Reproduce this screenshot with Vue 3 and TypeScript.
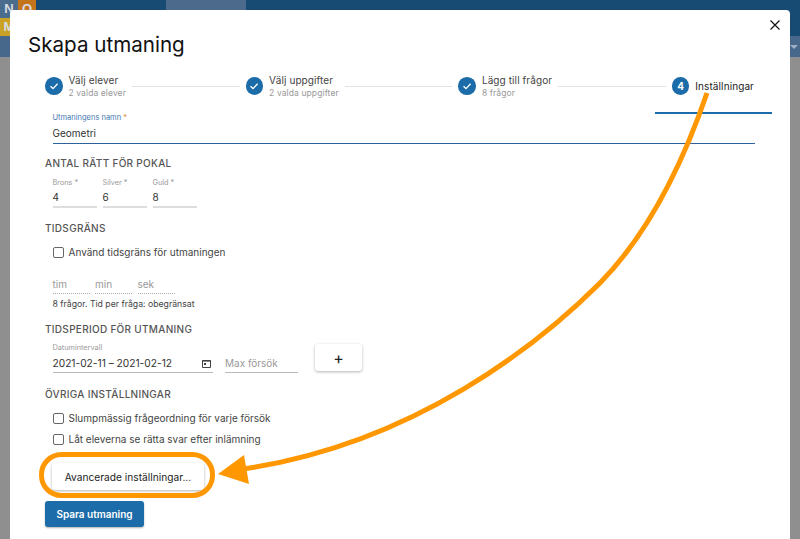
<script setup lang="ts">
const steps = [
  { title: 'Välj elever', sub: '2 valda elever' },
  { title: 'Välj uppgifter', sub: '2 valda uppgifter' },
  { title: 'Lägg till frågor', sub: '8 frågor' },
]
const medals = [
  { label: 'Brons *', value: '4' },
  { label: 'Silver *', value: '6' },
  { label: 'Guld *', value: '8' },
]
const times = ['tim', 'min', 'sek']
</script>

<template>
  <div class="page">
    <div class="topbar">
      <div class="logo">
        <span class="n">N</span><span class="o">O</span>
        <span class="m">M</span><span class="blank"></span>
      </div>
      <div class="tab"></div>
    </div>
    <div class="subbar"><span class="caret"></span></div>
    <div class="modal">
      <button class="close" aria-label="Stäng">
        <svg width="10" height="10" viewBox="0 0 10 10"><path d="M.5 .5 L9.500 9.500 M9.500 .5 L.5 9.500" stroke="#111" stroke-width="1.2" fill="none" /></svg>
      </button>
      <h1>Skapa utmaning</h1>
      <div class="stepper">
        <template v-for="s in steps" :key="s.title">
          <div class="step">
            <span class="dot">
              <svg width="12" height="12" viewBox="0 0 12 12"><path d="M2.500 6.300 L5 8.600 L9.600 3.800" stroke="#fff" stroke-width="1.3" fill="none" /></svg>
            </span>
            <div class="step-text">
              <div class="step-title">{{ s.title }}</div>
              <div class="step-sub">{{ s.sub }}</div>
            </div>
          </div>
          <div class="connector"></div>
        </template>
        <div class="step active">
          <span class="dot"><b>4</b></span>
          <div class="step-title">Inställningar</div>
        </div>
      </div>
      <div class="name-field">
        <div class="name-label">Utmaningens namn <span class="req">*</span></div>
        <div class="name-value">Geometri</div>
      </div>

      <h2 class="h-pokal">ANTAL RÄTT FÖR POKAL</h2>
      <div class="medals">
        <div v-for="m in medals" :key="m.label" class="medal">
          <div class="mini-label">{{ m.label }}</div>
          <div class="medal-value">{{ m.value }}</div>
        </div>
      </div>

      <h2 class="h-tid">TIDSGRÄNS</h2>
      <label class="check first"><span class="box"></span>Använd tidsgräns för utmaningen</label>
      <div class="times">
        <div v-for="t in times" :key="t" class="time">{{ t }}</div>
      </div>
      <div class="hint">8 frågor. Tid per fråga: obegränsat</div>

      <h2 class="h-period">TIDSPERIOD FÖR UTMANING</h2>
      <div class="period">
        <div class="date">
          <div class="mini-label">Datumintervall</div>
          <div class="date-value">
            <span>2021-02-11 – 2021-02-12</span>
            <svg width="9" height="9" viewBox="0 0 9 9"><path d="M.5 1.500h8v7h-8z" stroke="#444" stroke-width="1" fill="none" /><rect x=".5" y="1" width="8" height="1.600" fill="#444" /><rect x="2" y="4" width="2" height="2" fill="#444" /></svg>
          </div>
        </div>
        <div class="max">Max försök</div>
        <button class="plus">+</button>
      </div>

      <h2 class="h-ovr">ÖVRIGA INSTÄLLNINGAR</h2>
      <label class="check c1"><span class="box"></span>Slumpmässig frågeordning för varje försök</label>
      <label class="check c2"><span class="box"></span>Låt eleverna se rätta svar efter inlämning</label>
      <button class="advanced">Avancerade inställningar...</button>
      <button class="save">Spara utmaning</button>
    </div>

    <svg class="annotation" width="800" height="539" viewBox="0 0 800 539">
      <rect x="41.500" y="454.500" width="171" height="41" rx="20" fill="none" stroke="#ff9800" stroke-width="5" />
      <path d="M707 93 C 684 160, 650 232, 600 283 C 540 343, 415 444, 243 469" fill="none" stroke="#ff9800" stroke-width="5" />
      <path d="M218 474 L 244 455 L 249 484 Z" fill="#ff9800" />
    </svg>
  </div>
</template>

<style>
html, body { margin: 0; padding: 0; background: #8e8e8e; }
</style>

<style scoped>
.page {
  position: relative;
  width: 800px;
  height: 539px;
  overflow: hidden;
  background: #8f8f8f;
  font-family: Inter, "Liberation Sans", sans-serif;
  color: #333;
}
.topbar { height: 36px; background: #174b73; display: flex; }
.logo { width: 36px; display: grid; grid-template-columns: 18px 18px; grid-auto-rows: 18px; font: 700 13px/18px "Liberation Sans", sans-serif; text-align: center; color: #d8dde2; }
.n { background: #4a6d8d; }
.o { background: #c4751c; }
.m { background: #c9a227; }
.blank { background: #174b73; }
.tab { width: 80px; height: 36px; margin-left: 130px; background: #4c6a8c; }
.subbar { height: 21px; background: #47688a; position: relative; }
.caret { position: absolute; left: 790px; top: 9px; border-left: 4px solid transparent; border-right: 4px solid transparent; border-top: 4px solid #9fb0c2; }
.modal {
  position: absolute;
  left: 10px;
  top: 10px;
  width: 780px;
  height: 540px;
  background: #fff;
  border-radius: 4px 4px 0 0;
  padding: 0 35px 0 42.500px;
  box-sizing: border-box;
}
.close { position: absolute; right: 10px; top: 10px; border: 0; padding: 0; background: none; width: 10px; height: 10px; display: flex; }
h1 { margin: 0 0 0 -24.500px; padding-top: 20.500px; font-size: 20.600px; line-height: 27px; font-weight: 400; color: #111; }
.stepper { display: flex; align-items: center; height: 30px; margin: 13.500px 1px 0 -7.500px; }
.step { display: flex; align-items: center; gap: 6px; flex: none; }
.dot { width: 17.500px; height: 17.500px; border-radius: 50%; background: #1b6ca8; display: flex; align-items: center; justify-content: center; color: #fff; font-size: 10px; flex: none; }
.step-title { font-size: 10px; line-height: 14px; color: #444; letter-spacing: .1px; }
.step-sub { font-size: 8.500px; line-height: 12px; color: #999; letter-spacing: .1px; }
.connector { flex: 1; height: 1px; background: #e3e3e3; margin: 0 6px; }
.active { position: relative; height: 17.500px; }
.active .step-title { color: #222; }
.active::after { content: ""; position: absolute; left: -17px; right: -18px; top: 34.500px; height: 2px; background: #1b6ca8; }
.name-field { margin-top: 12px; border-bottom: 1px solid #2d6299; height: 30px; }
.name-label { font-size: 7.500px; line-height: 10px; color: #3f78b3; }
.req { color: #e08a2a; }
.name-value { font-size: 10px; line-height: 17px; color: #333; margin-top: 1.500px; }
h2 { margin: 0 0 0 -7.500px; font-size: 10px; line-height: 14px; font-weight: 500; color: #555; letter-spacing: .3px; }
.h-pokal { margin-top: 12px; }
.medals { display: flex; gap: 6px; margin-top: 7.500px; }
.medal { width: 44px; height: 30.500px; border-bottom: 2px solid #ddd; box-sizing: border-box; }
.mini-label { font-size: 7.300px; line-height: 10px; color: #999; }
.medal-value { font-size: 10px; line-height: 17px; color: #333; margin-top: 1px; }
.h-tid { margin-top: 13px; }
.check { display: flex; align-items: center; gap: 5px; font-size: 10px; line-height: 14px; color: #444; }
.box { width: 9px; height: 9px; border: 1.500px solid #666; border-radius: 2px; flex: none; }
.first { margin-top: 10px; }
.times { display: flex; gap: 5.500px; margin-top: 18px; }
.time { width: 37px; height: 16px; border-bottom: 1px dotted #aaa; font-size: 10px; line-height: 14px; color: #999; }
.hint { font-size: 8.700px; line-height: 12px; color: #444; margin-top: 4px; }
.h-period { margin-top: 12px; }
.period { display: flex; margin-top: 7px; height: 30px; }
.date { width: 160.500px; height: 29px; border-bottom: 1px solid #bbb; margin-right: 12px; }
.date .mini-label { margin-bottom: 2px; }
.date-value { display: flex; justify-content: space-between; align-items: center; padding-right: 2.500px; font-size: 10.200px; line-height: 16px; color: #333; }
.max { width: 73px; height: 17px; margin-top: 12px; border-bottom: 1px solid #bbb; font-size: 10px; line-height: 16px; color: #999; }
.plus { width: 47px; height: 27px; margin-left: 17px; margin-top: 1px; border: 0; background: #fff; border-radius: 3px; box-shadow: 0 1px 3px rgba(0,0,0,.3); font: 400 16px Inter, sans-serif; color: #222; padding: 0; }
.h-ovr { margin-top: 13.500px; }
.c1 { margin-top: 10.500px; }
.c2 { margin-top: 7px; }
.advanced { display: block; width: 152px; height: 27px; margin-top: 17px; margin-left: -.5px; border: 0; background: #fff; border-radius: 3px; box-shadow: 0 1px 3px rgba(0,0,0,.3); font: 400 10.200px Inter, sans-serif; color: #222; padding: 0; }
.save { display: block; width: 99px; height: 26px; margin-top: 11px; margin-left: -7.500px; border: 0; background: #1b6ca8; border-radius: 3px; box-shadow: 0 1px 2px rgba(0,0,0,.3); font: 600 10px Inter, sans-serif; color: #fff; padding: 0; }
.annotation { position: absolute; left: 0; top: 0; pointer-events: none; }
</style>
